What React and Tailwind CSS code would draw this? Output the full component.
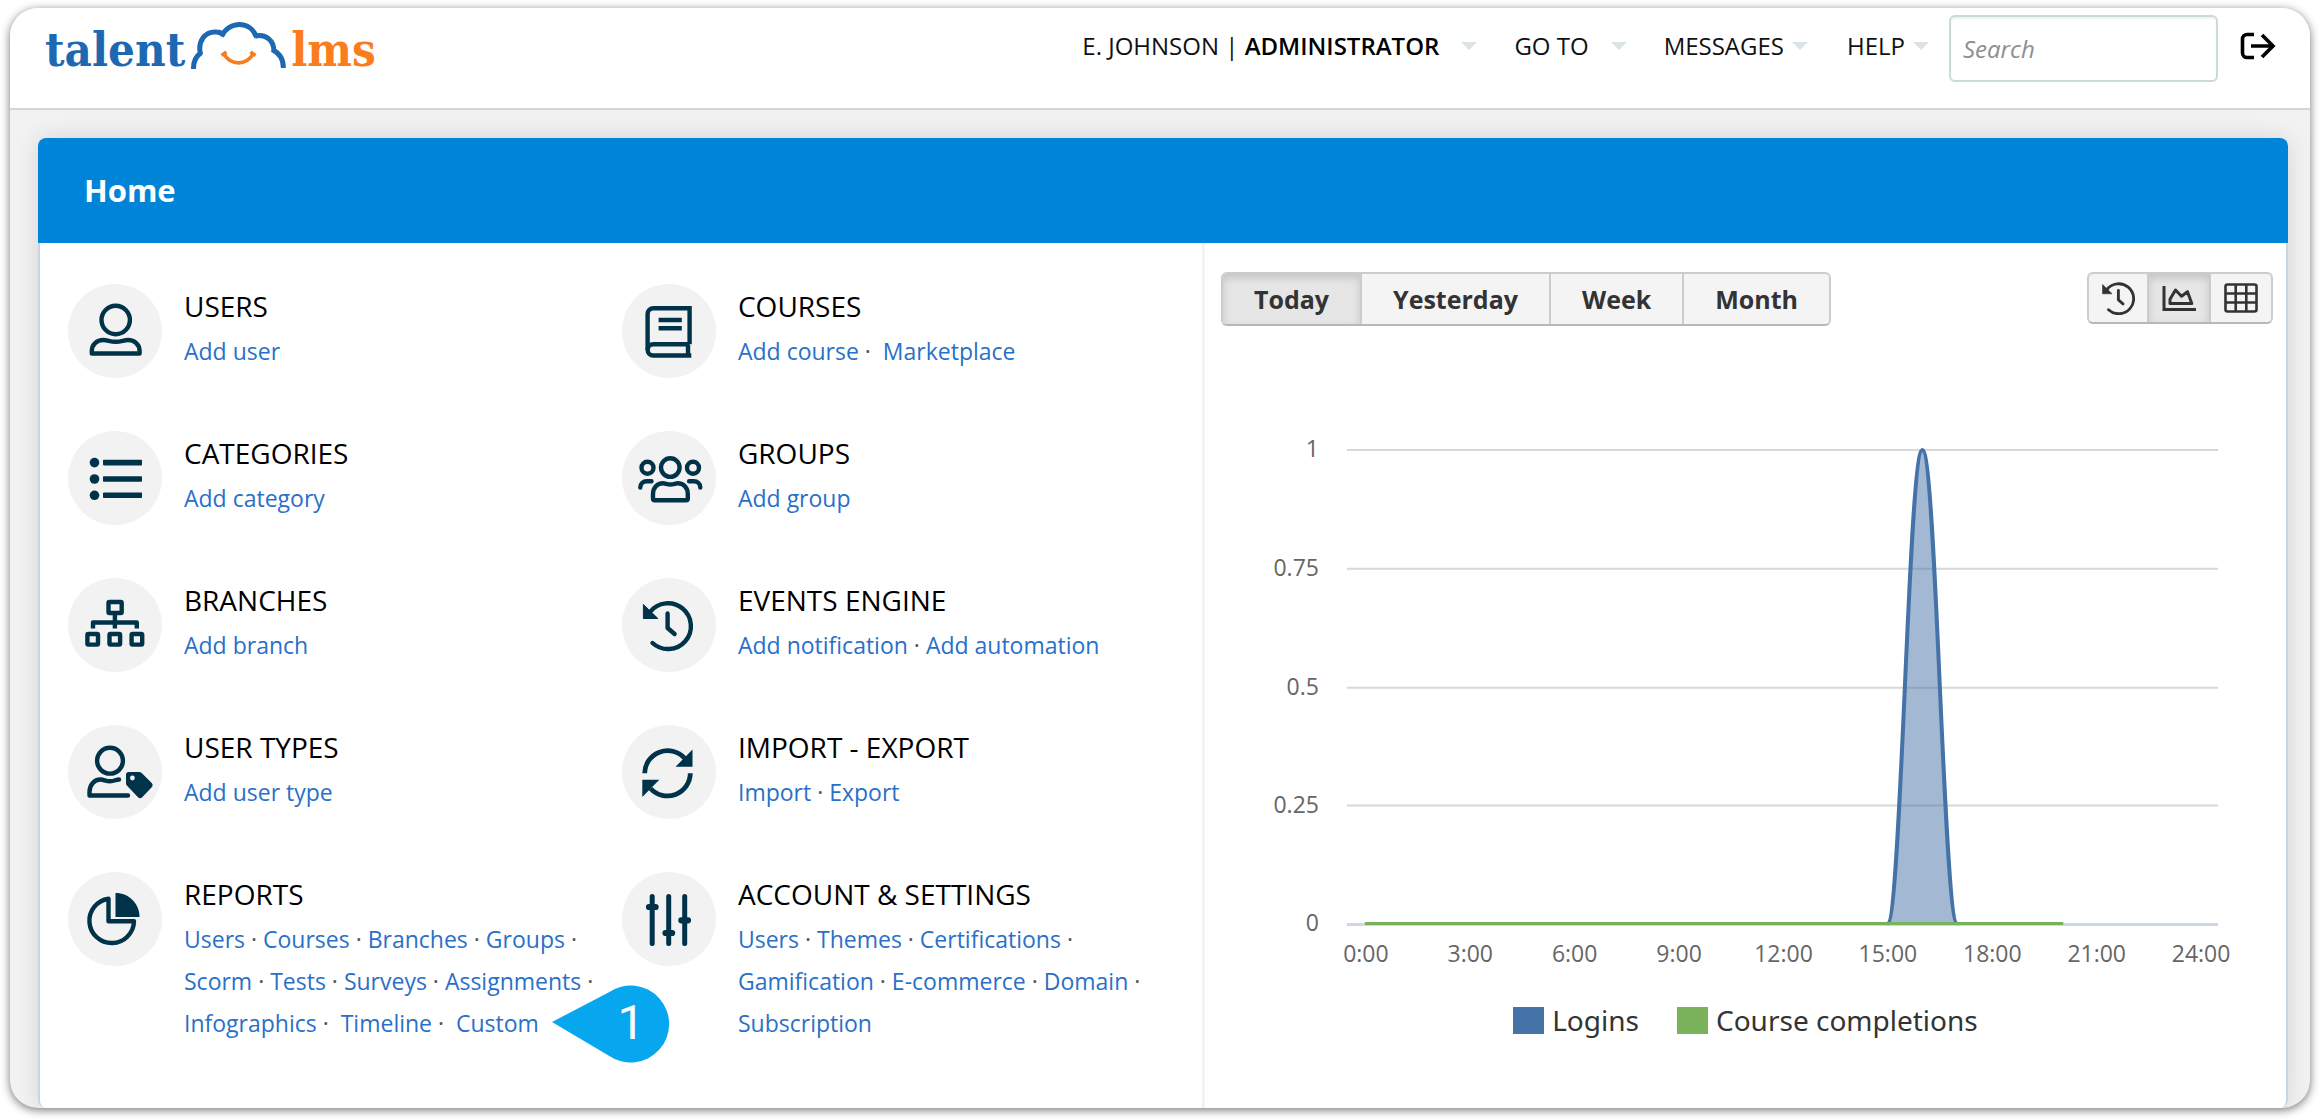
import React from "react";

const stroke = {
  fill: "none",
  stroke: "currentColor",
  strokeWidth: 4.4,
  strokeLinecap: "round",
  strokeLinejoin: "round",
};

const icons = {
  user: (
    <g {...stroke}>
      <circle cx="47.7" cy="36" r="14.2" />
      <path d="M23.8 69.5V67c0-6.500 5-11 11.500-11 4.500 0 6.500 1.800 12.400 1.800S55.500 56 60 56c6.500 0 11.600 4.500 11.600 11v2.500z" />
    </g>
  ),
  list: (
    <g fill="currentColor">
      {[31.6, 48, 64.3].map((y) => (
        <g key={y}>
          <circle cx="26.5" cy={y} r="4.8" />
          <rect x="35" y={y - 2.8} width="39" height="5.6" rx="0.8" />
        </g>
      ))}
    </g>
  ),
  branches: (
    <g {...stroke} strokeWidth="4.4">
      <rect x="40.5" y="24" width="13.2" height="11" rx="1" />
      <rect x="19.4" y="56" width="10.6" height="10.6" rx="1" />
      <rect x="41.5" y="56" width="10.6" height="10.6" rx="1" />
      <rect x="63.6" y="56" width="10.6" height="10.6" rx="1" />
      <path d="M46.900 36v14.500M25 50.500v-6h43.800v6" strokeLinecap="butt" />
    </g>
  ),
  book: (
    <g {...stroke}>
      <path d="M67.600 60.300V24.200H31.500a5.900 5.900 0 0 0-5.900 5.900v35.700a5.700 5.700 0 0 0 5.700 5.700h38" strokeLinecap="butt" strokeLinejoin="miter" />
      <path d="M67.600 60.300H31.300a5.600 5.600 0 0 0-5.600 5.600M66 61v10.500" strokeLinecap="butt" />
      <path d="M36.600 36h23.200M36.600 44.300h23.200" strokeLinecap="butt" />
    </g>
  ),
  groups: (
    <g {...stroke}>
      <circle cx="48.3" cy="36.6" r="9.3" />
      <circle cx="25.5" cy="36.8" r="6" />
      <circle cx="71" cy="36.8" r="6" />
      <path d="M31 67.500V63c0-6.500 4.300-10.800 10-10.800 2.500 0 4 1.300 7.400 1.300s5-1.300 7.400-1.300c5.700 0 10 4.300 10 10.800v4.500c0 1-.8 1.800-1.800 1.800H32.800c-1 0-1.800-.8-1.800-1.800z" />
      <path d="M18.300 56.500c0-4 3-6.300 6.500-6.300h4.700M78.300 56.500c0-4-3-6.300-6.500-6.300h-4.700" />
    </g>
  ),
  history: (
    <>
      <path {...stroke} d="M28 34a22.900 22.900 0 1 1 2.500 31M45.600 35.500V50l7 6" />
      <path fill="currentColor" stroke="currentColor" strokeWidth="1" strokeLinejoin="round" d="M21.400 26.500v14h14.500z" />
    </>
  ),
  userTag: (
    <>
      <g {...stroke}>
        <circle cx="42" cy="35.7" r="12.9" />
        <path d="M60 70.500H21.500V67c0-6.800 4.500-12.500 11-12.500 3.500 0 5 1.800 9.500 1.800 4.300 0 6-1.800 9-1.800" />
      </g>
      <path fill="currentColor" fillRule="evenodd" d="M60.500 47h10.500c1 0 2 .4 2.700 1.100l10 10c1.200 1.200 1.200 3 0 4.200l-9.500 10c-1.200 1.200-3 1.200-4.200 0l-10.700-11.300c-.9-.8-1.300-1.800-1.300-3V49.500c0-1.400 1.100-2.500 2.500-2.500zm3.900 3.600a2.400 2.400 0 1 0 0 4.800 2.400 2.400 0 0 0 0-4.800z" />
    </>
  ),
  reports: (
    <>
      <path {...stroke} d="M40.500 26.700V49.300H66a22.300 22.300 0 1 1-25.500-22.600z" />
      <path fill="currentColor" d="M47.500 21c13.500 0 24 10.500 24 24h-24z" />
    </>
  ),
  refresh: (
    <>
      <path {...stroke} strokeWidth="4.8" strokeLinecap="butt" d="M22.700 48.300a22.900 22.900 0 0 1 39.800-15.200M68.300 48.300A22.900 22.900 0 0 1 28.500 63.500" />
      <path fill="currentColor" d="M70.500 24.500v17.300h-17zM20.300 72V54.700h17z" />
    </>
  ),
  sliders: (
    <g {...stroke} strokeWidth="5">
      <path d="M30.200 24.500v47M46.700 24.500v47M62.700 24.500v47" />
      <path strokeWidth="6.2" d="M27 35h6.600M43.500 61h6.600M59.300 48.300H66" />
    </g>
  ),
};

const sections = [
  { icon: "user", title: "USERS", rows: [["Add user"]] },
  { icon: "book", title: "COURSES", rows: [["Add course", "wide", "Marketplace"]] },
  { icon: "list", title: "CATEGORIES", rows: [["Add category"]] },
  { icon: "groups", title: "GROUPS", rows: [["Add group"]] },
  { icon: "branches", title: "BRANCHES", rows: [["Add branch"]] },
  { icon: "history", title: "EVENTS ENGINE", rows: [["Add notification", "dot", "Add automation"]] },
  { icon: "userTag", title: "USER TYPES", rows: [["Add user type"]] },
  { icon: "refresh", title: "IMPORT - EXPORT", rows: [["Import", "dot", "Export"]] },
  {
    icon: "reports",
    title: "REPORTS",
    rows: [
      ["Users", "dot", "Courses", "dot", "Branches", "dot", "Groups", "dot"],
      ["Scorm", "dot", "Tests", "dot", "Surveys", "dot", "Assignments", "dot"],
      ["Infographics", "wide", "Timeline", "wide", "Custom"],
    ],
    callout: true,
  },
  {
    icon: "sliders",
    title: "ACCOUNT & SETTINGS",
    rows: [
      ["Users", "dot", "Themes", "dot", "Certifications", "dot"],
      ["Gamification", "dot", "E-commerce", "dot", "Domain", "dot"],
      ["Subscription"],
    ],
  },
];

function Callout() {
  return (
    <span className="absolute top-1/2 left-full ml-3 flex h-20 w-30 -translate-y-1/2 items-center justify-end">
      <svg viewBox="0 0 120 80" className="absolute inset-0 h-full w-full" aria-hidden="true">
        <path fill="#06a7ee" d="M1 39 57.500 9.500a38.500 38.500 0 1 1 0 63z" />
      </svg>
      <span className="relative w-20 text-center font-[Roboto,sans-serif] text-[48px] leading-none text-white">1</span>
    </span>
  );
}

function Section({ icon, title, rows, callout }) {
  return (
    <section className="flex gap-[22px]">
      <div className="size-[94px] shrink-0 rounded-full bg-[#f2f2f2] text-[#003349]">
        <svg viewBox="0 0 94 94" className="size-full" aria-hidden="true">
          {icons[icon]}
        </svg>
      </div>
      <div className="flex flex-col gap-[3px] pt-px">
        <h2 className="text-[28px] leading-[42px] font-medium whitespace-nowrap text-black">{title}</h2>
        <div className="text-[23px] leading-[42px] whitespace-nowrap text-[#555]">
          {rows.map((row, i) => (
            <p key={i}>
              {row.map((part, j) => {
                if (part === "dot") return <span key={j}>{" · "}</span>;
                if (part === "wide") return <span key={j}>{" ·\u00a0 "}</span>;
                const last = callout && part === "Custom";
                return (
                  <span key={j} className={last ? "relative" : undefined}>
                    <a href="#" className="text-[#2a70c8] hover:underline">{part}</a>
                    {last && <Callout />}
                  </span>
                );
              })}
            </p>
          ))}
        </div>
      </div>
    </section>
  );
}

function Logo() {
  return (
    <a href="#" aria-label="talentlms" className="flex h-[82px] items-center font-['DejaVu_Serif_Condensed','DejaVu_Serif',serif] text-[47px] leading-none font-bold">
      <span className="text-[#1c68b3]">talent</span>
      <svg viewBox="190 19 98 60" className="mx-1 h-[60px] w-[98px]" aria-hidden="true" fill="none" strokeWidth="5">
        <path stroke="#1c68b3" d="M194.500 69C194.300 61.500 197 56 202 52.800M201.700 55C198 41.500 206 31 217.500 32c3 .1 5.500 1 7.500 3M222.500 36.500C226 29 233 24.500 240.500 24.500c7.500 0 14 4.500 17 12.500M256 36.200C267 33.500 275.500 41 274.800 52M273 49.500C280.500 53 284.500 60 284.300 68" />
        <path stroke="#f97d1c" strokeWidth="3.6" d="M224.500 53.500C232 66 247 66 254.500 53.500M222.500 55.500l5-3.500M256.500 55.500l-5-3.500" />
      </svg>
      <span className="text-[#f97d1c]">lms</span>
    </a>
  );
}

function Caret() {
  return (
    <svg viewBox="0 0 16 8" className="h-2 w-4" aria-hidden="true">
      <path fill="#dbe3e6" d="M0 0h16L8 8z" />
    </svg>
  );
}

function NavButton({ children, className }) {
  return (
    <button type="button" className={`flex items-center whitespace-nowrap ${className}`}>
      <span>{children}</span>
      <Caret />
    </button>
  );
}

const hours = ["0:00", "3:00", "6:00", "9:00", "12:00", "15:00", "18:00", "21:00", "24:00"];
const levels = [
  ["1", 109],
  ["0.75", 228],
  ["0.5", 347],
  ["0.25", 465],
  ["0", 584],
];

function Chart() {
  return (
    <figure>
      <svg viewBox="0 0 1082 630" className="block w-full" role="img" aria-label="Logins and course completions by hour">
        {levels.map(([label, y]) => (
          <g key={label}>
            <path d={`M142 ${y}H1014`} stroke={label === "0" ? "#cdd9e6" : "#d6d8d9"} strokeWidth={label === "0" ? 3 : 2} />
            <text x="114" y={y + 7} textAnchor="end" fontSize="23" fill="#666">{label}</text>
          </g>
        ))}
        <path d="M683 583C697 583 704 109 718 109S739 583 753 583z" fill="#4572a7" fillOpacity="0.5" />
        <path d="M683 583C697 583 704 109 718 109S739 583 753 583" fill="none" stroke="#4572a7" strokeWidth="4" />
        <path d="M160 583H859" stroke="#77b25c" strokeWidth="3" />
        {hours.map((h, i) => (
          <text key={h} x={161 + i * 104.5} y="622" textAnchor="middle" fontSize="23" fill="#666">{h}</text>
        ))}
      </svg>
      <figcaption className="mt-[27px] flex justify-center gap-[38px] font-['Noto_Sans',sans-serif] text-[28px] leading-[46px] text-[#333]">
        <span className="flex items-center gap-2"><i className="h-[27px] w-[31px] bg-[#4572a7]" />Logins</span>
        <span className="flex items-center gap-2"><i className="h-[27px] w-[31px] bg-[#7ab35c]" />Course completions</span>
      </figcaption>
    </figure>
  );
}

const groupBox = "flex divide-x-2 divide-[#ccc] overflow-hidden rounded-md border-2 border-[#ccc] border-b-[#b8b8b8] bg-[#f4f4f4] text-[#333]";
const pressed = "bg-[#e6e6e6] shadow-[inset_0_4px_8px_rgba(0,0,0,0.15)]";

export default function App() {
  return (
    <div className="flex min-h-screen flex-col bg-white px-2.5 pt-2 pb-3 font-['Open_Sans',sans-serif]">
      <div className="flex flex-1 flex-col overflow-hidden rounded-[28px] bg-[#f2f2f2] shadow-[0_2px_10px_rgba(0,0,0,0.55)]">
        <header className="flex h-[102px] shrink-0 items-start justify-between border-b-2 border-[#cfd8df] bg-white pr-[34px] pl-[35px]">
          <Logo />
          <div className="flex items-start">
            <nav className="flex h-[76px] items-center text-[24px] text-[#111]">
              <NavButton className="mr-[37px] gap-[22px]">E. JOHNSON | <b className="font-semibold text-black">ADMINISTRATOR</b></NavButton>
              <NavButton className="mr-[37px] gap-[22px]">GO TO</NavButton>
              <NavButton className="mr-[39px] gap-2">MESSAGES</NavButton>
              <NavButton className="mr-5 gap-2">HELP</NavButton>
            </nav>
            <input type="search" aria-label="Search" placeholder="Search" className="mt-[7px] h-[67px] w-[269px] rounded-md border-2 border-[#cbd8dc] bg-white px-3 text-[24px] shadow-[inset_0_2px_2px_rgba(0,0,0,0.06)] placeholder:text-[#8e8e8e] placeholder:italic" />
            <button type="button" aria-label="Log out" className="mt-6 ml-[22px]">
              <svg viewBox="0 0 36 28" className="h-7 w-9" fill="none" stroke="#000" strokeWidth="3.6" aria-hidden="true">
                <path d="M14 2.500H7A4.500 4.500 0 0 0 2.500 7v14A4.500 4.500 0 0 0 7 25.500h7M11 14h22M22 3l11 11-11 11" />
              </svg>
            </button>
          </div>
        </header>
        <main className="flex flex-1 flex-col pt-7 pr-[22px] pl-7">
          <div className="flex flex-1 flex-col rounded-lg bg-white shadow-[0_0_24px_rgba(0,0,0,0.12)]">
            <h1 className="rounded-t-lg bg-[#0084d8] px-[46px] text-[31px] leading-[105px] font-bold text-white">Home</h1>
            <div className="grid flex-1 grid-cols-[1166fr_1082fr] rounded-b-lg border-x-2 border-[#c8d6e0]">
              <div className="grid grid-cols-2 content-start gap-y-[53px] border-r-3 border-[#f3f3f3] pt-[41px] pr-[26px] pb-9 pl-7">
                {sections.map((s) => (
                  <Section key={s.title} {...s} />
                ))}
              </div>
              <div className="flex flex-col">
                <div className="flex items-start justify-between pt-[29px] pr-[13px] pl-4">
                  <div className={`${groupBox} text-[25px] leading-[50px] font-bold`}>
                    <button type="button" aria-pressed="true" className={`px-[31px] ${pressed}`}>Today</button>
                    <button type="button" className="px-[31px]">Yesterday</button>
                    <button type="button" className="px-[31px]">Week</button>
                    <button type="button" className="px-[31px]">Month</button>
                  </div>
                  <div className={groupBox}>
                    <button type="button" aria-label="History" className="flex h-12 w-[60px] items-center justify-center">
                      <svg viewBox="19 21 52 52" className="size-[34px]" aria-hidden="true">{icons.history}</svg>
                    </button>
                    <button type="button" aria-label="Chart" aria-pressed="true" className={`flex h-12 w-[62px] items-center justify-center ${pressed}`}>
                      <svg viewBox="0 0 34 28" className="h-7 w-[34px]" fill="none" stroke="currentColor" strokeWidth="3" aria-hidden="true">
                        <path d="M2 2v23.500h32" />
                        <path d="M8 19.500v-4.200L13.500 6l6 6.200 6-4.500 4.300 11.800z" strokeLinejoin="round" />
                      </svg>
                    </button>
                    <button type="button" aria-label="Table" className="flex h-12 w-[60px] items-center justify-center">
                      <svg viewBox="0 0 34 30" className="h-[30px] w-[34px]" fill="none" stroke="currentColor" strokeWidth="2.6" aria-hidden="true">
                        <rect x="1.5" y="1.5" width="31" height="27" rx="2" />
                        <path d="M1.500 10.500h31M1.500 19.500h31M11.700 1.500v27M22.300 1.500v27" />
                      </svg>
                    </button>
                  </div>
                </div>
                <div className="mt-[15px]"><Chart /></div>
              </div>
            </div>
          </div>
        </main>
      </div>
    </div>
  );
}
